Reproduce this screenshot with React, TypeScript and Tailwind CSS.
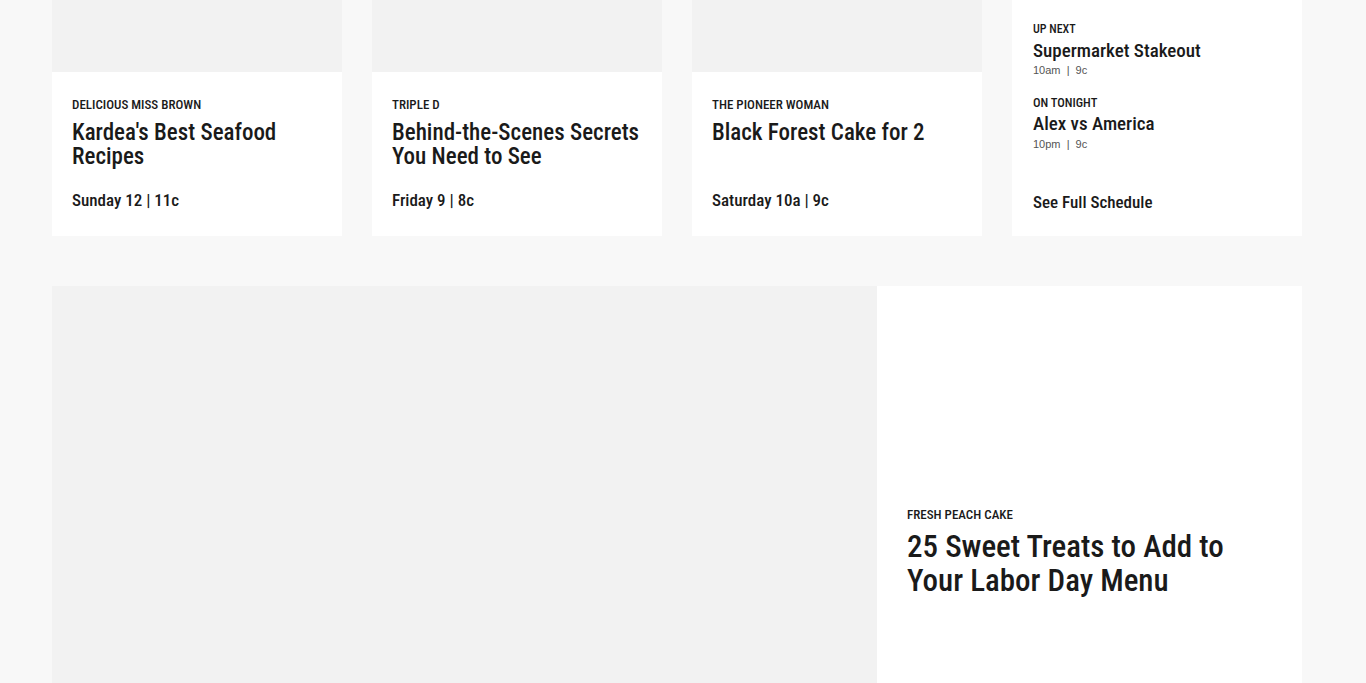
type Show = { label: string; title: string; time: string };

const shows: Show[] = [
  { label: "Delicious Miss Brown", title: "Kardea's Best Seafood Recipes", time: "Sunday 12 | 11c" },
  { label: "Triple D", title: "Behind-the-Scenes Secrets You Need to See", time: "Friday 9 | 8c" },
  { label: "The Pioneer Woman", title: "Black Forest Cake for 2", time: "Saturday 10a | 9c" },
];

function ShowCard({ show }: { show: Show }) {
  return (
    <div className="flex flex-col">
      {/* image placeholder */}
      <div className="h-[72px] bg-[#f2f2f2]" />
      <div className="flex flex-1 flex-col bg-white px-5 pt-[25px] pb-[26px]">
        <p className="text-[13px] font-medium uppercase leading-[16px]">{show.label}</p>
        <h3 className="mt-[8px] h-[48px] text-[23px] font-medium leading-[24px]">{show.title}</h3>
        <p className="mt-[21px] text-[17px] font-medium leading-[20px]">{show.time}</p>
      </div>
    </div>
  );
}

function Schedule() {
  return (
    <div className="flex flex-col bg-white px-[21px] pt-[21px] pb-[24px]">
      <p className="text-[12px] font-medium uppercase leading-[16px]">Up Next</p>
      <h4 className="mt-[3px] text-[19px] font-medium leading-[22px]">Supermarket Stakeout</h4>
      <p className="mt-[1px] font-['Liberation_Sans',sans-serif] text-[11px] leading-[14px] text-[#555]">
        10am&nbsp; |&nbsp; 9c
      </p>
      <p className="mt-[18px] text-[12.5px] font-medium uppercase leading-[16px]">On Tonight</p>
      <h4 className="mt-[2px] text-[19px] font-medium leading-[22px]">Alex vs America</h4>
      <p className="mt-[2px] font-['Liberation_Sans',sans-serif] text-[11px] leading-[14px] text-[#555]">
        10pm&nbsp; |&nbsp; 9c
      </p>
      <a className="mt-auto text-[17px] font-medium leading-[20px]">See Full Schedule</a>
    </div>
  );
}

export default function App() {
  return (
    <div className="min-h-screen bg-[#f8f8f8] px-[52px] font-['Roboto_Condensed',sans-serif] text-[#1a1a1a]">
      <div className="grid w-[1250px] grid-cols-4 gap-[30px]">
        {shows.map((s) => (
          <ShowCard key={s.title} show={s} />
        ))}
        <Schedule />
      </div>

      {/* featured story */}
      <div className="mt-[50px] flex h-[397px] w-[1250px]">
        <div className="w-[825px] bg-[#f2f2f2]" />
        <div className="flex-1 bg-white px-[30px] pt-[221px]">
          <p className="text-[13px] font-medium uppercase leading-[16px]">Fresh Peach Cake</p>
          <h2 className="mt-[7px] text-[31px] font-medium leading-[34px]">25 Sweet Treats to Add to Your Labor Day Menu</h2>
        </div>
      </div>
    </div>
  );
}
